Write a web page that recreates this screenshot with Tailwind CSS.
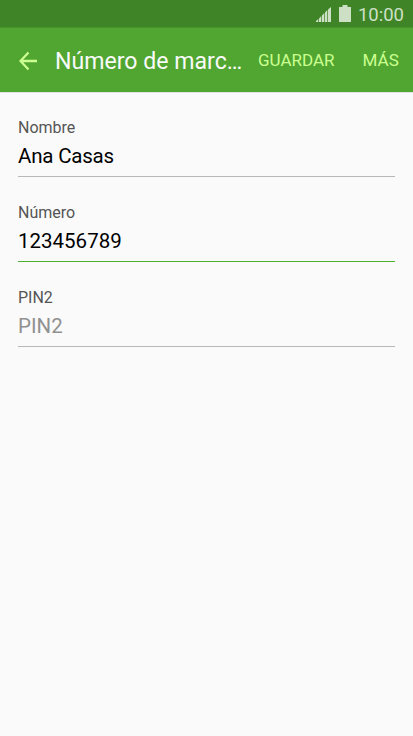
<!DOCTYPE html>
<html lang="es">
<head>
    <meta charset="UTF-8">
    <meta name="viewport" content="width=device-width, initial-scale=1.0">
    <title>Número de marcación fija</title>
    <script src="https://cdn.jsdelivr.net/npm/@tailwindcss/browser@4"></script>
</head>
<body class="h-screen overflow-hidden bg-[#fafafa] font-[Roboto,sans-serif]">
    <!-- Status bar -->
    <div class="flex h-7 items-center justify-end border-b border-[#479529] bg-[#3f8426] pr-[9px] text-[#cde0c6]">
        <svg class="mt-0.5 mr-2 h-[15px] w-[15px]" viewBox="0 0 15 15" fill="currentColor">
            <path d="M0 15v-1l2.300-2v3zM3 15v-3.500l2.300-2.500v6zM6 15V8.500l2.300-2.500v9zM9 15V5.500L11.300 3v12zM12 15V2.500L15 0v15z"/>
        </svg>
        <svg class="mr-[7px] h-[17px] w-3" viewBox="0 0 12 17" fill="currentColor">
            <path d="M3.500 0h5v2H12v15H0V2h3.500z"/>
        </svg>
        <span class="pt-[3px] text-[18.5px] leading-[27px]">10:00</span>
    </div>

    <!-- Action bar -->
    <header class="flex h-[65px] items-center border-b border-[#e0e3df] bg-[#50a631] text-[#ccff90]">
        <svg class="mt-0.5 ml-[19px] h-5 w-[18px] shrink-0" viewBox="0 0 18 20" fill="none" stroke="currentColor" stroke-width="2.300">
            <path d="M18 10H1.500M9.500 1.500L1.500 10l8 8.500"/>
        </svg>
        <h1 class="ml-[18px] w-[188px] shrink-0 pt-1 text-[23.100px] whitespace-nowrap text-[#fafafa]">Número de marc…</h1>
        <button class="ml-[15px] pt-px text-[17px]">GUARDAR</button>
        <button class="ml-7 pt-px text-[17px]">MÁS</button>
    </header>

    <!-- Form -->
    <main class="px-[18px] pt-[23px]">
        <div class="h-[61px] border-b border-[#b8b8b8]">
            <p class="h-6 text-base leading-6 text-[#555]">Nombre</p>
            <p class="text-[20.5px] leading-[33px] tracking-[-0.2px] text-black">Ana Casas</p>
        </div>
        <div class="mt-6 h-[61px] border-b border-[#4caf2e]">
            <p class="h-6 text-base leading-6 text-[#555]">Número</p>
            <p class="text-[20.5px] leading-[33px] text-black">123456789</p>
        </div>
        <div class="mt-6 h-[61px] border-b border-[#b8b8b8]">
            <p class="h-6 text-base leading-6 text-[#555]">PIN2</p>
            <p class="text-[20.5px] leading-[33px] text-[#919191]">PIN2</p>
        </div>
    </main>
</body>
</html>
